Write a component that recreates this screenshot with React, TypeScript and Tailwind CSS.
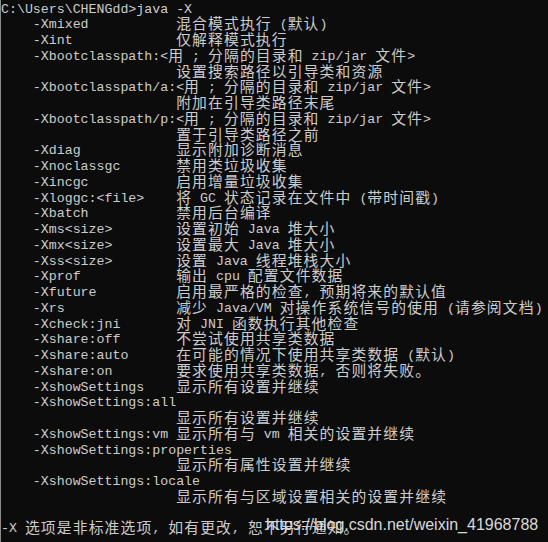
const lines = [
  "C:\\Users\\CHENGdd>java -X",
  "    -Xmixed           混合模式执行 (默认)",
  "    -Xint             仅解释模式执行",
  "    -Xbootclasspath:<用 ; 分隔的目录和 zip/jar 文件>",
  "                      设置搜索路径以引导类和资源",
  "    -Xbootclasspath/a:<用 ; 分隔的目录和 zip/jar 文件>",
  "                      附加在引导类路径末尾",
  "    -Xbootclasspath/p:<用 ; 分隔的目录和 zip/jar 文件>",
  "                      置于引导类路径之前",
  "    -Xdiag            显示附加诊断消息",
  "    -Xnoclassgc       禁用类垃圾收集",
  "    -Xincgc           启用增量垃圾收集",
  "    -Xloggc:<file>    将 GC 状态记录在文件中 (带时间戳)",
  "    -Xbatch           禁用后台编译",
  "    -Xms<size>        设置初始 Java 堆大小",
  "    -Xmx<size>        设置最大 Java 堆大小",
  "    -Xss<size>        设置 Java 线程堆栈大小",
  "    -Xprof            输出 cpu 配置文件数据",
  "    -Xfuture          启用最严格的检查, 预期将来的默认值",
  "    -Xrs              减少 Java/VM 对操作系统信号的使用 (请参阅文档)",
  "    -Xcheck:jni       对 JNI 函数执行其他检查",
  "    -Xshare:off       不尝试使用共享类数据",
  "    -Xshare:auto      在可能的情况下使用共享类数据 (默认)",
  "    -Xshare:on        要求使用共享类数据, 否则将失败。",
  "    -XshowSettings    显示所有设置并继续",
  "    -XshowSettings:all",
  "                      显示所有设置并继续",
  "    -XshowSettings:vm 显示所有与 vm 相关的设置并继续",
  "    -XshowSettings:properties",
  "                      显示所有属性设置并继续",
  "    -XshowSettings:locale",
  "                      显示所有与区域设置相关的设置并继续",
  "",
  "-X 选项是非标准选项, 如有更改, 恕不另行通知。",
];

// wide (CJK) runs get their own span so each char takes two columns like in the console
function Line({ text }: { text: string }) {
  const parts = text.split(/([\u3000-\u9fff\uff00-\uffef]+)/);
  return (
    <div className="h-[15.75px] whitespace-pre">
      {parts.map((p, i) =>
        i % 2 === 1 ? (
          <span
            key={i}
            className="text-[14.8px] tracking-[1.14px] leading-[0] align-[-1px] font-['Noto_Sans_CJK_SC',sans-serif]"
          >
            {p}
          </span>
        ) : (
          <span key={i}>{p}</span>
        )
      )}
    </div>
  );
}

export default function App() {
  return (
    <div className="relative w-[548px] h-[542px] overflow-hidden bg-[#0c0c0c] border-l border-[#8a8a8a] pt-[1.5px] text-[#cccccc] text-[13.28px] leading-[15.75px] font-['Liberation_Mono',monospace]">
      {lines.map((l, i) => (
        <Line key={i} text={l} />
      ))}
      <div className="absolute left-[265px] top-[517px] text-[16px] leading-none text-[#d9d9d9] font-['Liberation_Sans',Arial,sans-serif]">
        https://blog.csdn.net/weixin_41968788
      </div>
    </div>
  );
}
